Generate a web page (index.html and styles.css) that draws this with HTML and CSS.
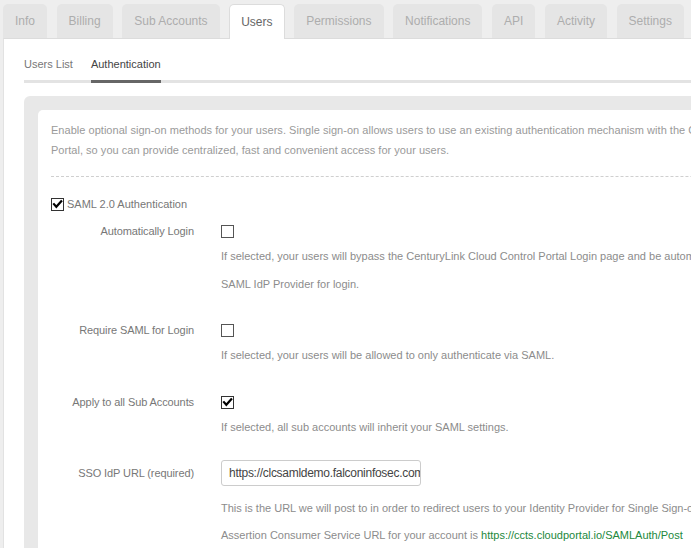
FILE: index.html
```html
<!DOCTYPE html>
<html lang="en">
<head>
<meta charset="utf-8">
<title>Users - Authentication</title>
<link rel="stylesheet" href="styles.css">
</head>
<body>
<div class="page">
  <nav class="tabs">
    <a class="tab">Info</a>
    <a class="tab">Billing</a>
    <a class="tab">Sub Accounts</a>
    <a class="tab active">Users</a>
    <a class="tab">Permissions</a>
    <a class="tab">Notifications</a>
    <a class="tab">API</a>
    <a class="tab">Activity</a>
    <a class="tab">Settings</a>
  </nav>
  <div class="panel">
    <nav class="subtabs">
      <a class="subtab">Users List</a>
      <a class="subtab active">Authentication</a>
    </nav>
    <div class="well">
      <div class="card">
        <p class="intro">Enable optional sign-on methods for your users. Single sign-on allows users to use an existing authentication mechanism with the CenturyLink Cloud Control<br>Portal, so you can provide centralized, fast and convenient access for your users.</p>
        <hr class="dash">
        <label class="saml">
          <span class="cb checked"><svg viewBox="0 0 11 11" width="11" height="11"><polyline points="2,5.2 4.3,7.8 9.2,2.3" fill="none" stroke="#000" stroke-width="2.2" stroke-linecap="square"/></svg></span>
          SAML 2.0 Authentication
        </label>

        <div class="row">
          <div class="lbl">Automatically Login</div>
          <div class="ctl">
            <div class="ctl-line"><span class="cb"></span></div>
            <p class="help help-2">If selected, your users will bypass the CenturyLink Cloud Control Portal Login page and be automatically redirected to your<br>SAML IdP Provider for login.</p>
          </div>
        </div>

        <div class="row row-2">
          <div class="lbl">Require SAML for Login</div>
          <div class="ctl">
            <div class="ctl-line"><span class="cb"></span></div>
            <p class="help">If selected, your users will be allowed to only authenticate via SAML.</p>
          </div>
        </div>

        <div class="row">
          <div class="lbl">Apply to all Sub Accounts</div>
          <div class="ctl">
            <div class="ctl-line"><span class="cb checked"><svg viewBox="0 0 11 11" width="11" height="11"><polyline points="2,5.2 4.3,7.8 9.2,2.3" fill="none" stroke="#000" stroke-width="2.2" stroke-linecap="square"/></svg></span></div>
            <p class="help">If selected, all sub accounts will inherit your SAML settings.</p>
          </div>
        </div>

        <div class="row row-url">
          <div class="lbl">SSO IdP URL (required)</div>
          <div class="ctl">
            <div class="ctl-line"><input class="url" type="text" value="https://clcsamldemo.falconinfosec.com/adfs/ls/" readonly></div>
            <p class="help help-url">This is the URL we will post to in order to redirect users to your Identity Provider for Single Sign-on.<br>Assertion Consumer Service URL for your account is <a class="link">https://ccts.cloudportal.io/SAMLAuth/Post</a></p>
          </div>
        </div>
      </div>
    </div>
  </div>
</div>
</body>
</html>
```

FILE: styles.css
```css
html, body {
  margin: 0;
  height: 100%;
}
body {
  background: #eeeeee;
  font-family: "Liberation Sans", Arial, sans-serif;
  overflow: hidden;
}
.page {
  padding: 4px 0 0 3px;
  width: 1200px;
}
.tabs {
  display: flex;
  align-items: flex-start;
  gap: 9.6px;
  height: 34px;
}
.tab {
  box-sizing: border-box;
  height: 34px;
  line-height: 35px;
  padding: 0 12px;
  background: #e5e5e5;
  color: #adadad;
  font-size: 12px;
  border-radius: 5px 5px 0 0;
  text-decoration: none;
  white-space: nowrap;
}
.tab.active {
  position: relative;
  z-index: 1;
  height: 35px;
  line-height: 34px;
  padding: 0 11px;
  background: #fff;
  color: #666;
  border: 1px solid #dcdcdc;
  border-bottom: none;
}
.panel {
  background: #fff;
  border-top: 1px solid #dcdcdc;
  border-left: 1px solid #e2e2e2;
  padding: 17px 0 0 20px;
  min-height: 600px;
}
.subtabs {
  display: flex;
  gap: 18px;
  border-bottom: 3px solid #e3e3e3;
  font-size: 11px;
}
.subtab {
  line-height: 16px;
  padding-bottom: 8px;
  margin-bottom: -3px;
  border-bottom: 3px solid transparent;
  color: #777;
}
.subtab.active {
  color: #444;
  border-bottom-color: #666;
}
.well {
  margin-top: 13px;
  background: #e8e8e8;
  border-radius: 6px 0 0 0;
  padding: 14px 0 0 14px;
}
.card {
  background: #fff;
  border-radius: 5px 0 0 0;
  padding: 10px 0 0 13px;
  min-height: 500px;
}
.intro {
  margin: 0;
  font-size: 11px;
  line-height: 20px;
  color: #9a9a9a;
  white-space: nowrap;
  letter-spacing: 0.03px;
}
.dash {
  border: 0;
  border-top: 1px dashed #cfcfcf;
  margin: 16px 0 0 0;
  height: 0;
}
.saml {
  display: flex;
  align-items: center;
  gap: 3px;
  margin-top: 17px;
  height: 20px;
  font-size: 11px;
  color: #777;
}
.cb {
  box-sizing: border-box;
  width: 13px;
  height: 13px;
  border: 1px solid #555;
  background: #fff;
  display: inline-flex;
  align-items: center;
  justify-content: center;
  flex: none;
}
.cb.checked {
  border-color: #333;
}
.row {
  display: grid;
  grid-template-columns: 143px 1fr;
  column-gap: 27px;
  margin-top: 20px;
}
.saml + .row {
  margin-top: 4px;
}
.row-2 {
  margin-top: 19px;
}
.row-url {
  margin-top: 19px;
}
.lbl {
  text-align: right;
  font-size: 11px;
  line-height: 26px;
  color: #777;
  white-space: nowrap;
  letter-spacing: -0.1px;
}
.ctl-line {
  height: 26px;
  display: flex;
  align-items: center;
}
.help {
  margin: -1px 0 0 0;
  font-size: 11px;
  line-height: 27px;
  color: #8c8c8c;
  white-space: nowrap;
}
.help-2 {
  margin-top: -2px;
  line-height: 28px;
}
.help-url {
  margin-top: 9px;
}
.url {
  box-sizing: border-box;
  width: 200px;
  height: 26px;
  border: 1px solid #cccccc;
  border-radius: 3px;
  padding: 0 0 0 7px;
  font-family: "Liberation Sans", Arial, sans-serif;
  font-size: 12px;
  letter-spacing: -0.28px;
  color: #444;
  background: #fff;
  outline: none;
}
.link {
  color: #22883c;
  text-decoration: none;
}
```
